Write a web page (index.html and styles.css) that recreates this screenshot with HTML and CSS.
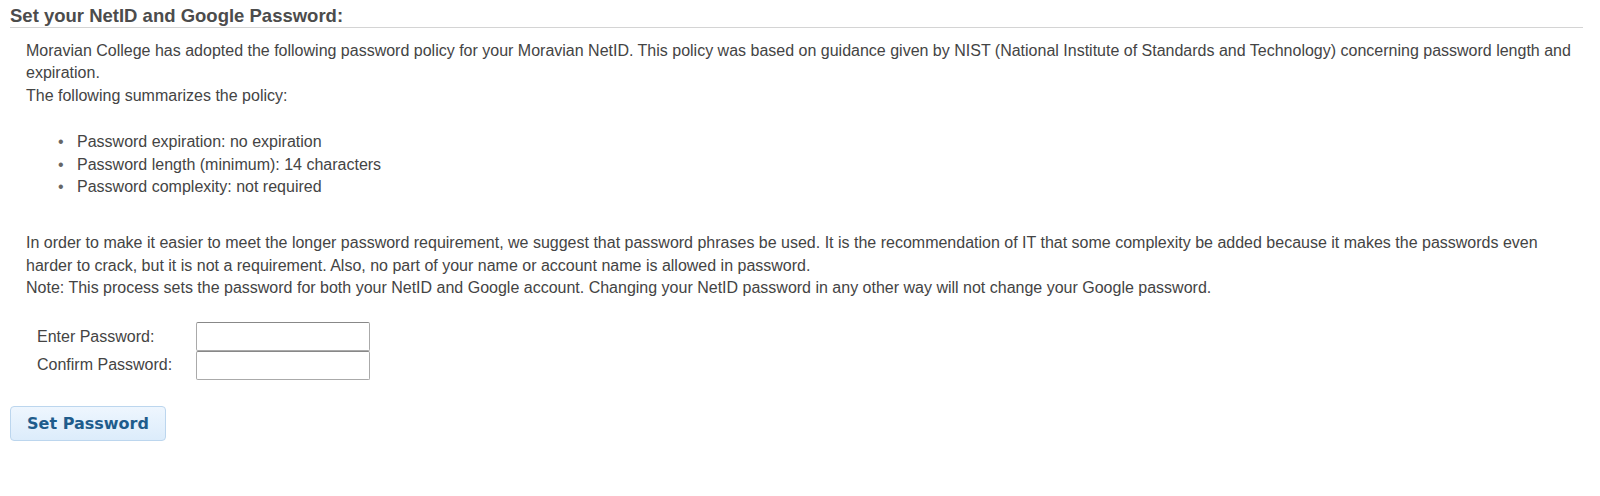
FILE: index.html
```html
<!DOCTYPE html>
<html>
<head>
<meta charset="utf-8">
<link rel="stylesheet" href="styles.css">
</head>
<body>
<div class="page">
  <h2 class="title">Set your NetID and Google Password:</h2>
  <div class="content">
    <p class="para">Moravian College has adopted the following password policy for your Moravian NetID. This policy was based on guidance given by NIST (National Institute of Standards and Technology) concerning password length and expiration.<br>The following summarizes the policy:</p>
    <ul class="policy">
      <li>Password expiration: no expiration</li>
      <li>Password length (minimum): 14 characters</li>
      <li>Password complexity: not required</li>
    </ul>
    <p class="para">In order to make it easier to meet the longer password requirement, we suggest that password phrases be used. It is the recommendation of IT that some complexity be added because it makes the passwords even harder to crack, but it is not a requirement. Also, no part of your name or account name is allowed in password.<br>Note: This process sets the password for both your NetID and Google account. Changing your NetID password in any other way will not change your Google password.</p>
    <div class="form">
      <label class="lbl" for="p1">Enter Password:</label>
      <input class="field" id="p1" type="password">
      <label class="lbl" for="p2">Confirm Password:</label>
      <input class="field" id="p2" type="password">
    </div>
  </div>
  <button class="btn" type="button">Set Password</button>
</div>
</body>
</html>
```
FILE: styles.css
```css
html, body {
  margin: 0;
  padding: 0;
  background: #fff;
}
body {
  font-family: "Liberation Sans", Arial, sans-serif;
  color: #444;
}
.page {
  padding: 6px 17px 0 10px;
}
.title {
  margin: 0;
  font-size: 18.5px;
  font-weight: bold;
  color: #4c4c4c;
  line-height: 20px;
  padding-bottom: 1px;
  border-bottom: 1px solid #d4d4d4;
}
.content {
  padding: 12px 0 0 16px;
  font-size: 16px;
  line-height: 22.4px;
}
.para {
  margin: 0;
}
.policy {
  margin: 24px 0 34px;
  padding-left: 32px;
  list-style: none;
}
.policy li::before {
  content: "\2022";
  display: inline-block;
  width: 19px;
  color: #666;
  font-size: 16px;
}
.form {
  display: grid;
  grid-template-columns: 159px 174px;
  grid-auto-rows: 28.6px;
  align-items: center;
  padding: 23px 0 0 11px;
}
.lbl {
  font-size: 16px;
  color: #444;
}
.field {
  box-sizing: border-box;
  width: 174px;
  height: 29px;
  margin: 0;
  border: 1px solid #aaa;
  border-top-color: #888;
  border-radius: 2px;
  background: #fff;
}
.btn {
  margin-top: 26px;
  box-sizing: border-box;
  width: 156px;
  height: 35px;
  border: 1px solid #bcd6ee;
  border-radius: 4px;
  background: linear-gradient(#eef6fe, #dcecfb);
  color: #1e5c8c;
  font-family: "DejaVu Sans", sans-serif;
  font-weight: bold;
  font-size: 16px;
  cursor: pointer;
}
```
